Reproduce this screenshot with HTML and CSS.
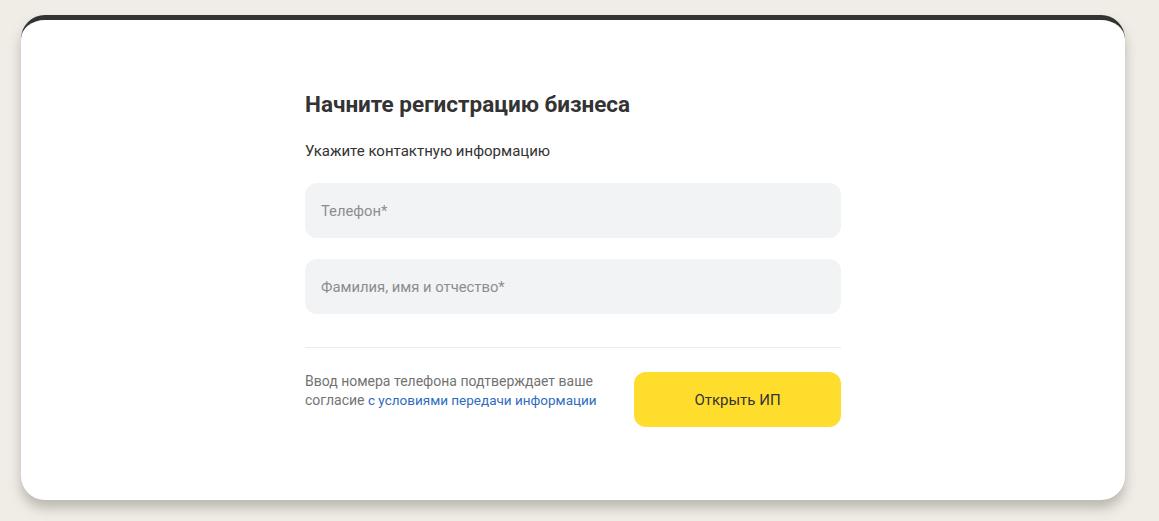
FILE: index.html
```html
<!DOCTYPE html>
<html lang="ru">
<head>
<meta charset="utf-8">
<title>Регистрация бизнеса</title>
<link rel="stylesheet" href="styles.css">
</head>
<body>
<div class="page">
  <section class="card">
    <form class="form">
      <h1 class="title">Начните регистрацию бизнеса</h1>
      <p class="subtitle">Укажите контактную информацию</p>
      <div class="field"><span class="placeholder">Телефон*</span></div>
      <div class="field"><span class="placeholder">Фамилия, имя и отчество*</span></div>
      <div class="divider"></div>
      <div class="footer">
        <p class="consent">Ввод номера телефона подтверждает ваше согласие <a class="link" href="#">с условиями передачи информации</a></p>
        <button type="button" class="btn">Открыть ИП</button>
      </div>
    </form>
  </section>
</div>
</body>
</html>
```
FILE: styles.css
```css
html, body {
  margin: 0;
  padding: 0;
  background: #f0ede7;
  font-family: "Roboto", "Inter", "Liberation Sans", sans-serif;
  color: #333333;
}
.page {
  padding: 15px 34px 0 21px;
  height: 521px;
  box-sizing: border-box;
}
.card {
  background: #ffffff;
  border-top: 5px solid #333333;
  border-radius: 24px;
  height: 485px;
  box-sizing: border-box;
  box-shadow: 0 8px 12px rgba(90, 85, 70, 0.35);
  display: flex;
  justify-content: center;
}
.form {
  width: 536px;
  padding-top: 70px;
  display: flex;
  flex-direction: column;
}
.title {
  margin: 0;
  font-size: 22.5px;
  line-height: 28px;
  font-weight: 700;
  color: #333333;
}
.subtitle {
  margin: 23px 0 0;
  font-size: 15px;
  line-height: 20px;
  color: #333333;
}
.field {
  margin-top: 21px;
  height: 55px;
  border-radius: 12px;
  background: #f2f3f5;
  display: flex;
  align-items: center;
  padding-left: 16px;
}
.subtitle + .field { margin-top: 22px; }
.placeholder {
  font-size: 14.8px;
  color: #8a8d91;
}
.divider {
  margin-top: 33px;
  height: 1px;
  background: #ececec;
}
.footer {
  margin-top: 24px;
  display: flex;
  justify-content: space-between;
  align-items: flex-start;
}
.consent {
  margin: 0;
  width: 310px;
  font-size: 14px;
  line-height: 19px;
  color: #737373;
}
.link {
  color: #2f6cc0;
  font-size: 13.5px;
  text-decoration: none;
}
.btn {
  width: 207px;
  height: 55px;
  border: 0;
  border-radius: 12px;
  background: #ffdd2d;
  font-family: inherit;
  font-size: 15px;
  color: #333333;
}
```
